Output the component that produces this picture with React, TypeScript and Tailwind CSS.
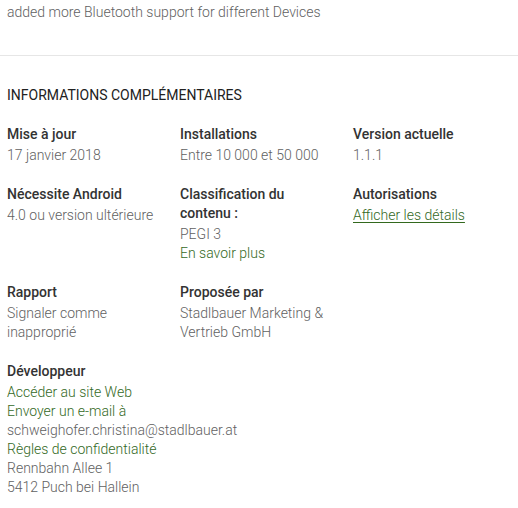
const details = [
  {
    title: 'Mise à jour',
    lines: [{ text: '17 janvier 2018' }],
  },
  {
    title: 'Installations',
    lines: [{ text: 'Entre 10 000 et 50 000' }],
  },
  {
    title: 'Version actuelle',
    lines: [{ text: '1.1.1' }],
  },
  {
    title: 'Nécessite Android',
    lines: [{ text: '4.0 ou version ultérieure' }],
  },
  {
    title: 'Classification du contenu :',
    lines: [{ text: 'PEGI 3' }, { text: 'En savoir plus', link: true }],
  },
  {
    title: 'Autorisations',
    lines: [{ text: 'Afficher les détails', link: true, underline: true }],
  },
  {
    title: 'Rapport',
    lines: [{ text: 'Signaler comme inapproprié' }],
  },
  {
    title: 'Proposée par',
    lines: [{ text: 'Stadlbauer Marketing & Vertrieb GmbH' }],
  },
]

const developer = [
  { text: 'Accéder au site Web', link: true },
  { text: 'Envoyer un e-mail à', link: true },
  { text: 'schweighofer.christina@stadlbauer.at' },
  { text: 'Règles de confidentialité', link: true },
  { text: 'Rennbahn Allee 1' },
  { text: '5412 Puch bei Hallein' },
]

type Line = { text: string; link?: boolean; underline?: boolean }

function Value({ line }: { line: Line }) {
  if (line.link) {
    return (
      <div className={line.underline ? 'text-[#33691e] underline underline-offset-2' : 'text-[#33691e]'}>
        {line.text}
      </div>
    )
  }
  return <div className="text-[#616161]">{line.text}</div>
}

export default function App() {
  return (
    <div className="w-[518px] h-[508px] bg-white overflow-hidden text-[14px] font-['Roboto','Liberation_Sans',sans-serif]">
      {/* What's new */}
      <div className="pl-[7px] pt-[3px] leading-[19px] font-light text-[#616161]">
        added more Bluetooth support for different Devices
      </div>
      <div className="mt-[33px] h-px bg-[#e6e6e6]" />

      {/* Additional info */}
      <div className="pl-[7px] pt-[30px]">
        <h2 className="leading-[19px] text-[#212121] uppercase">Informations complémentaires</h2>

        <div className="mt-[20px] grid grid-cols-[173px_173px_1fr] gap-y-[20px]">
          {details.map((d) => (
            <div key={d.title} className="pr-4">
              <div className="leading-[19px] font-medium text-[#333333] mb-[2px]">{d.title}</div>
              <div className="leading-[19px] font-light">
                {d.lines.map((l) => (
                  <Value key={l.text} line={l} />
                ))}
              </div>
            </div>
          ))}
          <div className="col-span-3">
            <div className="leading-[19px] font-medium text-[#333333] mb-[2px]">Développeur</div>
            <div className="leading-[19px] font-light">
              {developer.map((l) => (
                <Value key={l.text} line={l} />
              ))}
            </div>
          </div>
        </div>
      </div>
    </div>
  )
}
